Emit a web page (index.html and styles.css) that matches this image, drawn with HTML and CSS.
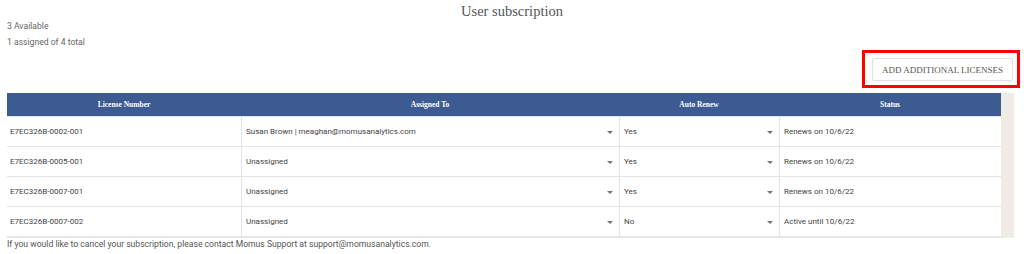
FILE: index.html
```html
<!DOCTYPE html>
<html>
<head>
<meta charset="utf-8">
<link rel="stylesheet" href="styles.css">
</head>
<body>
<div class="page">
  <h1 class="title">User subscription</h1>
  <div class="summary">
    <div class="line">3 Available</div>
    <div class="line">1 assigned of 4 total</div>
  </div>
  <div class="actions">
    <div class="highlight">
      <button class="add-btn">ADD ADDITIONAL LICENSES</button>
    </div>
  </div>
  <div class="table-wrap">
    <div class="table">
      <div class="row head">
        <div class="cell">License Number</div>
        <div class="cell">Assigned To</div>
        <div class="cell">Auto Renew</div>
        <div class="cell">Status</div>
      </div>
      <div class="row">
        <div class="cell">E7EC326B-0002-001</div>
        <div class="cell select">Susan Brown | meaghan@momusanalytics.com<span class="caret"></span></div>
        <div class="cell select">Yes<span class="caret"></span></div>
        <div class="cell">Renews on 10/6/22</div>
      </div>
      <div class="row">
        <div class="cell">E7EC326B-0005-001</div>
        <div class="cell select">Unassigned<span class="caret"></span></div>
        <div class="cell select">Yes<span class="caret"></span></div>
        <div class="cell">Renews on 10/6/22</div>
      </div>
      <div class="row">
        <div class="cell">E7EC326B-0007-001</div>
        <div class="cell select">Unassigned<span class="caret"></span></div>
        <div class="cell select">Yes<span class="caret"></span></div>
        <div class="cell">Renews on 10/6/22</div>
      </div>
      <div class="row">
        <div class="cell">E7EC326B-0007-002</div>
        <div class="cell select">Unassigned<span class="caret"></span></div>
        <div class="cell select">No<span class="caret"></span></div>
        <div class="cell">Active until 10/6/22</div>
      </div>
    </div>
    <div class="scroll-strip"></div>
  </div>
  <p class="footer">If you would like to cancel your subscription, please contact Momus Support at support@momusanalytics.com.</p>
</div>
</body>
</html>
```

FILE: styles.css
```css
* { box-sizing: border-box; }
html, body { margin: 0; padding: 0; background: #fff; }
body { font-family: Roboto, "Liberation Sans", sans-serif; color: #555; }
.page { padding: 0 7px; width: 1024px; }
.title {
  margin: 0;
  padding-top: 3px;
  height: 18px;
  line-height: 16px;
  text-align: center;
  font-family: "Liberation Serif", serif;
  font-weight: normal;
  font-size: 14.5px;
  color: #555;
}
.summary { font-size: 8.6px; color: #666; }
.summary .line { line-height: 16px; }
.actions { display: flex; justify-content: flex-end; margin-right: -3px; }
.highlight {
  border: 3px solid #f00;
  padding: 5px 4px 4px 7px;
  width: 158px;
  height: 38px;
}
.add-btn {
  display: block;
  width: 141px;
  height: 23px;
  background: #fff;
  border: 1px solid #e2e2e2;
  border-radius: 2px;
  font-family: "Liberation Serif", serif;
  font-size: 9px;
  color: #555;
  padding: 0;
}
.table-wrap { display: flex; margin-top: 5px; }
.table { width: 994px; border-bottom: 2px solid #e6e6e6; }
.scroll-strip { width: 13px; background: #efebe7; }
.row {
  display: grid;
  grid-template-columns: 234px 378px 160px 222px;
  height: 30px;
  border-top: 1px solid #e3e3e3;
}
.row.head {
  height: 23px;
  background: #3c5b92;
  border-top: none;
}
.row.head .cell {
  justify-content: center;
  color: #fff;
  font-family: "Liberation Serif", serif;
  font-weight: bold;
  font-size: 7.5px;
  border-left: none;
  padding: 0;
}
.cell {
  display: flex;
  align-items: center;
  padding: 0 4px;
  font-size: 8px;
  color: #444;
  border-left: 1px solid #e3e3e3;
}
.cell:first-child { border-left: none; padding-left: 3px; }
.cell.select { position: relative; }
.caret {
  position: absolute;
  right: 6px;
  top: 50%;
  margin-top: -1px;
  width: 0;
  height: 0;
  border-left: 3.5px solid transparent;
  border-right: 3.5px solid transparent;
  border-top: 3.5px solid #777;
}
.footer {
  margin: 0;
  font-size: 8.6px;
  line-height: 13px;
  color: #555;
}
```
